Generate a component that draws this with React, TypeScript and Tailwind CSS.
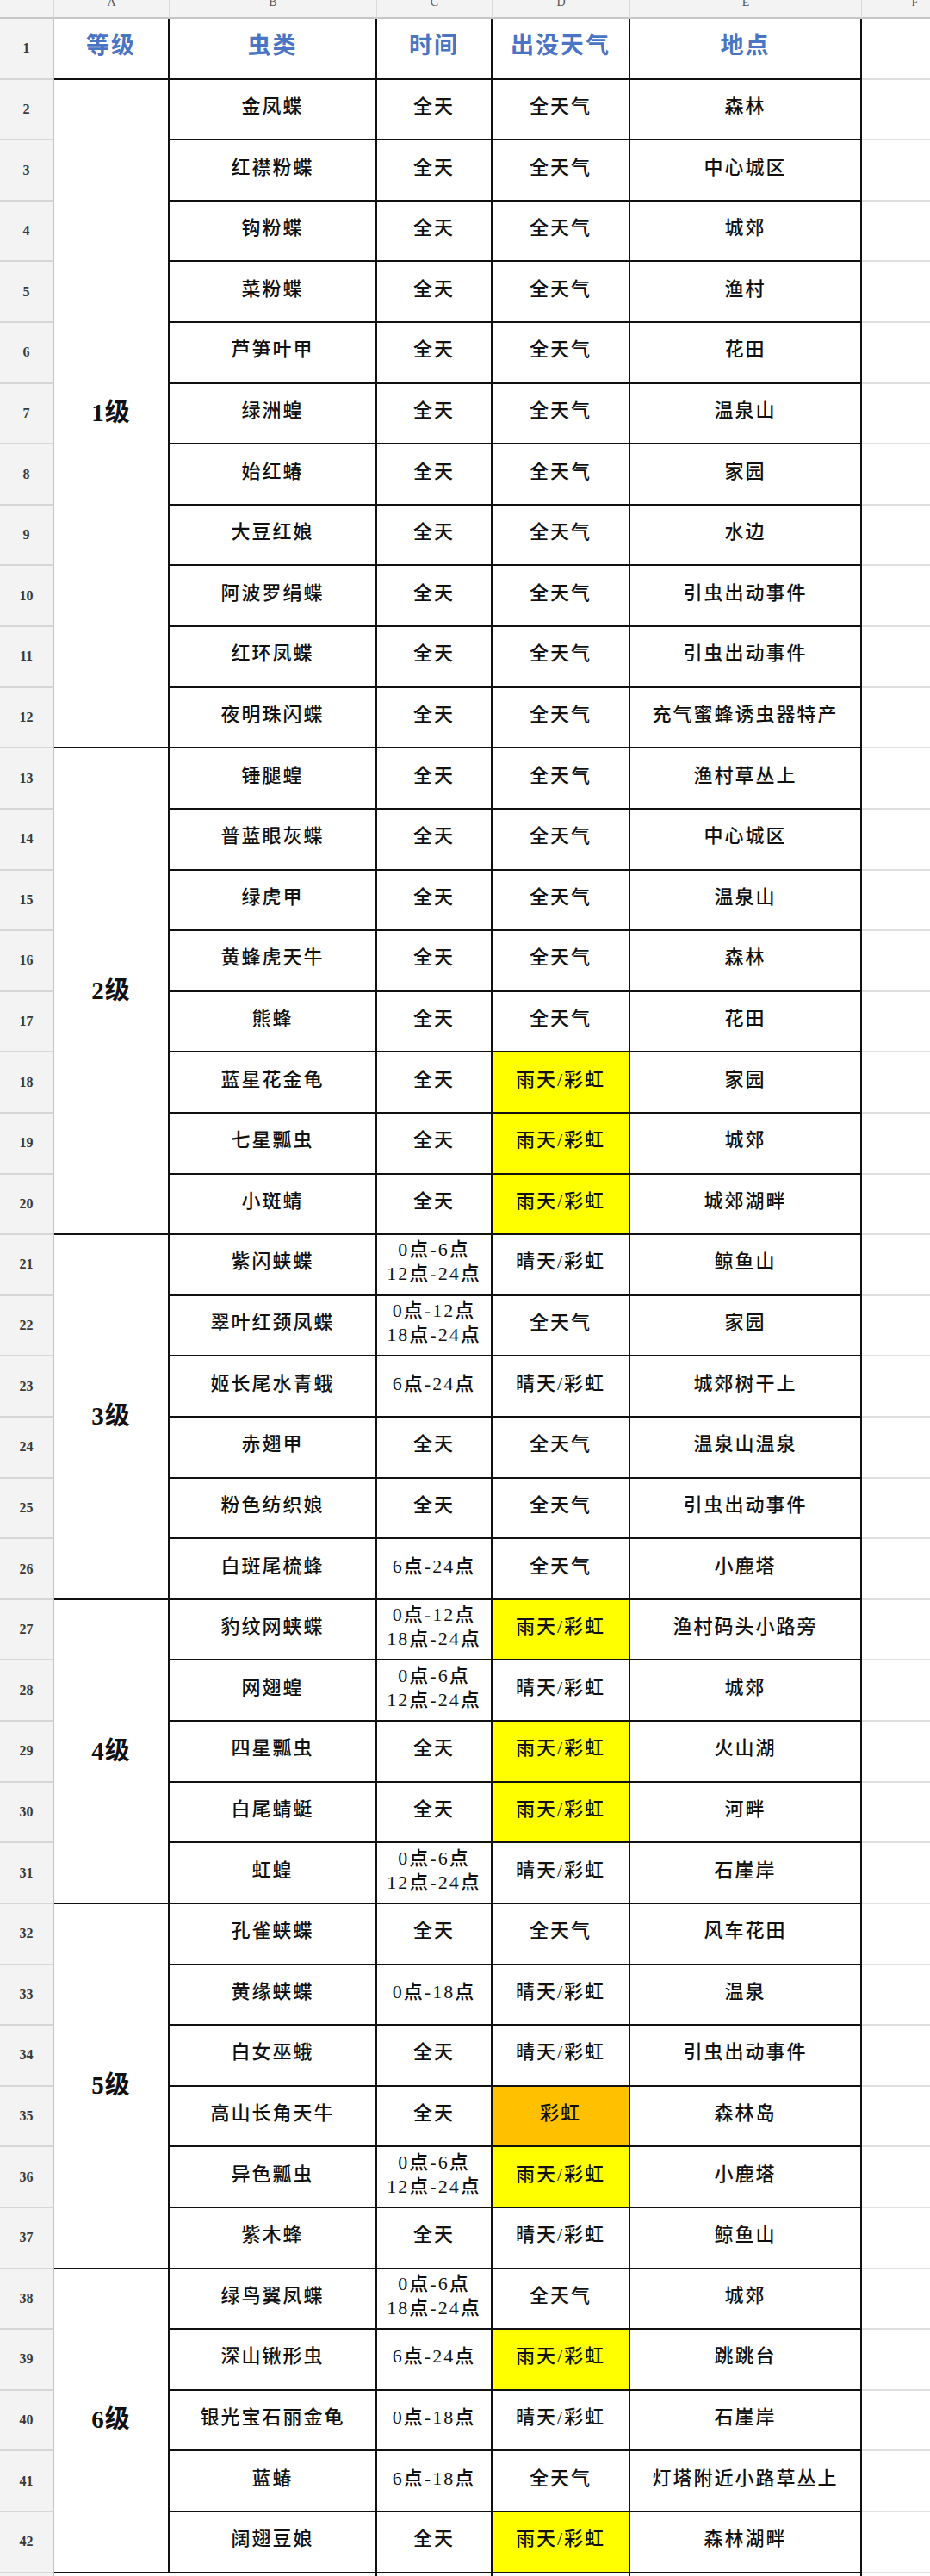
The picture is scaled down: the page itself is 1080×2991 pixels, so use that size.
import React from 'react';

type R = { n: string; t: string; w: string; p: string };
type G = { label: string; span: string; rows: R[] };

const D = '全天';
const W = '全天气';
const Q = '晴天/彩虹';
const Y = '雨天/彩虹';

const groups: G[] = [
  {
    label: '1级',
    span: 'row-span-11',
    rows: [
      { n: '金凤蝶', t: D, w: W, p: '森林' },
      { n: '红襟粉蝶', t: D, w: W, p: '中心城区' },
      { n: '钩粉蝶', t: D, w: W, p: '城郊' },
      { n: '菜粉蝶', t: D, w: W, p: '渔村' },
      { n: '芦笋叶甲', t: D, w: W, p: '花田' },
      { n: '绿洲蝗', t: D, w: W, p: '温泉山' },
      { n: '始红蝽', t: D, w: W, p: '家园' },
      { n: '大豆红娘', t: D, w: W, p: '水边' },
      { n: '阿波罗绢蝶', t: D, w: W, p: '引虫出动事件' },
      { n: '红环凤蝶', t: D, w: W, p: '引虫出动事件' },
      { n: '夜明珠闪蝶', t: D, w: W, p: '充气蜜蜂诱虫器特产' },
    ],
  },
  {
    label: '2级',
    span: 'row-span-8',
    rows: [
      { n: '锤腿蝗', t: D, w: W, p: '渔村草丛上' },
      { n: '普蓝眼灰蝶', t: D, w: W, p: '中心城区' },
      { n: '绿虎甲', t: D, w: W, p: '温泉山' },
      { n: '黄蜂虎天牛', t: D, w: W, p: '森林' },
      { n: '熊蜂', t: D, w: W, p: '花田' },
      { n: '蓝星花金龟', t: D, w: Y, p: '家园' },
      { n: '七星瓢虫', t: D, w: Y, p: '城郊' },
      { n: '小斑蜻', t: D, w: Y, p: '城郊湖畔' },
    ],
  },
  {
    label: '3级',
    span: 'row-span-6',
    rows: [
      { n: '紫闪蛱蝶', t: '0点-6点\n12点-24点', w: Q, p: '鲸鱼山' },
      { n: '翠叶红颈凤蝶', t: '0点-12点\n18点-24点', w: W, p: '家园' },
      { n: '姬长尾水青蛾', t: '6点-24点', w: Q, p: '城郊树干上' },
      { n: '赤翅甲', t: D, w: W, p: '温泉山温泉' },
      { n: '粉色纺织娘', t: D, w: W, p: '引虫出动事件' },
      { n: '白斑尾梳蜂', t: '6点-24点', w: W, p: '小鹿塔' },
    ],
  },
  {
    label: '4级',
    span: 'row-span-5',
    rows: [
      { n: '豹纹网蛱蝶', t: '0点-12点\n18点-24点', w: Y, p: '渔村码头小路旁' },
      { n: '网翅蝗', t: '0点-6点\n12点-24点', w: Q, p: '城郊' },
      { n: '四星瓢虫', t: D, w: Y, p: '火山湖' },
      { n: '白尾蜻蜓', t: D, w: Y, p: '河畔' },
      { n: '虹蝗', t: '0点-6点\n12点-24点', w: Q, p: '石崖岸' },
    ],
  },
  {
    label: '5级',
    span: 'row-span-6',
    rows: [
      { n: '孔雀蛱蝶', t: D, w: W, p: '风车花田' },
      { n: '黄缘蛱蝶', t: '0点-18点', w: Q, p: '温泉' },
      { n: '白女巫蛾', t: D, w: Q, p: '引虫出动事件' },
      { n: '高山长角天牛', t: D, w: '彩虹', p: '森林岛' },
      { n: '异色瓢虫', t: '0点-6点\n12点-24点', w: Y, p: '小鹿塔' },
      { n: '紫木蜂', t: D, w: Q, p: '鲸鱼山' },
    ],
  },
  {
    label: '6级',
    span: 'row-span-5',
    rows: [
      { n: '绿鸟翼凤蝶', t: '0点-6点\n18点-24点', w: W, p: '城郊' },
      { n: '深山锹形虫', t: '6点-24点', w: Y, p: '跳跳台' },
      { n: '银光宝石丽金龟', t: '0点-18点', w: Q, p: '石崖岸' },
      { n: '蓝蝽', t: '6点-18点', w: W, p: '灯塔附近小路草丛上' },
      { n: '阔翅豆娘', t: D, w: Y, p: '森林湖畔' },
    ],
  },
];

const font = "font-['Liberation_Serif','Noto_Sans_CJK_SC',serif]";
const rowHead =
  'flex items-center justify-center bg-[#f3f3f3] border-r-2 border-b-2 border-r-[#c4c4c4] border-b-[#d6d6d6] text-[16px] font-bold text-[#3a3a3a]';
const colHead =
  'flex justify-center overflow-hidden bg-[#f3f3f3] border-r border-b-2 border-r-[#dadada] border-b-[#c6c6c6] text-[14px] leading-[14px] text-[#555]';
const cell =
  'flex flex-col items-center justify-center text-center border-r-2 border-b-2 border-[#111] pb-1.5 text-[22px] leading-[28px] tracking-[2px] font-medium text-[#111]';
const fCell = 'border-b-2 border-[#e0e0e0] bg-white';

function weatherBg(w: string) {
  if (w === Y) return 'bg-[#ffff00]';
  if (w === '彩虹') return 'bg-[#ffc000]';
  return 'bg-white';
}

export default function App() {
  let num = 1;
  return (
    <div className={`w-[1080px] h-[2991px] overflow-hidden bg-white ${font}`}>
      <div className="grid w-[1125px] grid-cols-[63px_134px_241px_134px_160px_269px_124px] grid-rows-[22px_repeat(43,70.62px)]">
        {/* column headers */}
        <div className={colHead}></div>
        {['A', 'B', 'C', 'D', 'E', 'F'].map((c) => (
          <div key={c} className={colHead}>
            <span className="-mt-[4px]">{c}</span>
          </div>
        ))}

        {/* header row 1 */}
        <div className={rowHead}>1</div>
        {['等级', '虫类', '时间', '出没天气', '地点'].map((h) => (
          <div
            key={h}
            className="flex items-center justify-center pb-1.5 border-r-2 border-b-2 border-[#111] text-[27px] tracking-[2px] font-bold text-[#4a74c4] bg-white"
          >
            {h}
          </div>
        ))}
        <div className={fCell}></div>

        {groups.map((g) =>
          g.rows.map((r, i) => {
            num += 1;
            return (
              <React.Fragment key={`${g.label}-${i}`}>
                <div className={rowHead}>{num}</div>
                {i === 0 && (
                  <div
                    className={`${g.span} flex items-center justify-center border-r-2 border-b-2 border-[#111] bg-white text-[29px] tracking-[1px] font-bold text-[#111]`}
                  >
                    {g.label}
                  </div>
                )}
                <div className={`${cell} bg-white`}>{r.n}</div>
                <div className={`${cell} bg-white text-[21px]`}>
                  {r.t.split('\n').map((l) => (
                    <div key={l}>{l}</div>
                  ))}
                </div>
                <div className={`${cell} ${weatherBg(r.w)}`}>{r.w}</div>
                <div className={`${cell} bg-white`}>{r.p}</div>
                <div className={fCell}></div>
              </React.Fragment>
            );
          })
        )}

        {/* partial row 43 */}
        <div className={rowHead}>43</div>
        <div className="bg-white"></div>
        <div className="bg-white border-r-2 border-[#111]"></div>
        <div className="bg-white border-r-2 border-[#111]"></div>
        <div className="bg-white border-r-2 border-[#111]"></div>
        <div className="bg-white border-r-2 border-[#111]"></div>
        <div className="bg-white"></div>
      </div>
    </div>
  );
}
